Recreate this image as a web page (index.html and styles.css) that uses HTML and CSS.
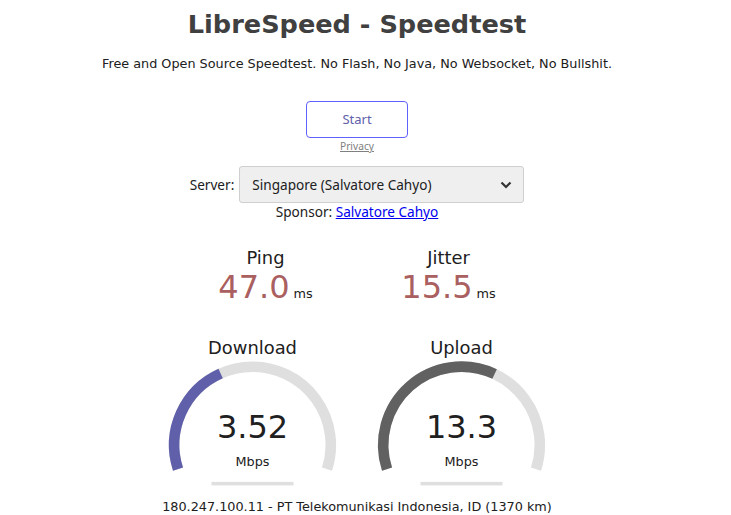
FILE: index.html
```html
<!DOCTYPE html>
<html lang="en">
<head>
    <meta charset="UTF-8">
    <title>LibreSpeed - Speedtest</title>
    <link rel="stylesheet" href="styles.css">
</head>
<body>
<h1>LibreSpeed - Speedtest</h1>
<p class="tagline">Free and Open Source Speedtest. No Flash, No Java, No Websocket, No Bullshit.</p>

<div class="start-btn">Start</div>
<div><a class="privacy" href="#">Privacy</a></div>

<div class="server-row">
    <span class="server-label">Server:</span>
    <div class="server-select">
        <span>Singapore (Salvatore Cahyo)</span>
        <svg width="12" height="8" viewBox="0 0 12 8"><path d="M1.5 1.5 L6 6 L10.5 1.5" fill="none" stroke="#333" stroke-width="2.2"/></svg>
    </div>
</div>
<div class="sponsor">Sponsor: <a href="#">Salvatore Cahyo</a></div>

<div class="test-group small">
    <div class="test-area2">
        <div class="test-name">Ping</div>
        <div class="meter-text ping">47.0</div>
        <div class="unit">ms</div>
    </div>
    <div class="test-area2">
        <div class="test-name">Jitter</div>
        <div class="meter-text ping">15.5</div>
        <div class="unit">ms</div>
    </div>
</div>

<div class="test-group">
    <div class="test-area">
        <div class="test-name">Download</div>
        <svg class="gauge" viewBox="0 0 205 160" width="205" height="160">
            <path d="M28.03 133.2 A78.3 78.3 0 1 1 176.97 133.2" fill="none" stroke="#dfdfdf" stroke-width="10.56"/>
            <path d="M28.03 133.2 A78.3 78.3 0 0 1 70.65 37.47" fill="none" stroke="#6060AA" stroke-width="10.56"/>
            <rect x="61.5" y="145.9" width="82" height="3.5" fill="#dfdfdf"/>
        </svg>
        <div class="meter-text">3.52</div>
        <div class="unit">Mbps</div>
    </div>
    <div class="test-area">
        <div class="test-name">Upload</div>
        <svg class="gauge" viewBox="0 0 205 160" width="205" height="160">
            <path d="M28.03 133.2 A78.3 78.3 0 1 1 176.97 133.2" fill="none" stroke="#dfdfdf" stroke-width="10.56"/>
            <path d="M28.03 133.2 A78.3 78.3 0 0 1 135.6 38.04" fill="none" stroke="#616161" stroke-width="10.56"/>
            <rect x="61.5" y="145.9" width="82" height="3.5" fill="#dfdfdf"/>
        </svg>
        <div class="meter-text">13.3</div>
        <div class="unit">Mbps</div>
    </div>
</div>

<div class="ip-area">180.247.100.11 - PT Telekomunikasi Indonesia, ID (1370 km)</div>
</body>
</html>
```
FILE: styles.css
```css
html, body {
    margin: 0;
    padding: 0;
    background: #FFFFFF;
    color: #202020;
}
body {
    text-align: center;
    font-family: "DejaVu Sans", sans-serif;
    font-size: 12.8px;
    padding-right: 17px;
}
h1 {
    color: #404040;
    font-size: 25.6px;
    margin: 9px 0 0;
}
.tagline {
    margin: 17px 0 0;
}
.start-btn {
    display: block;
    margin: 30px auto 0;
    width: 102px;
    height: 37px;
    line-height: 34px;
    box-sizing: border-box;
    border: 1.5px solid #6060FF;
    border-radius: 4px;
    color: #6060AA;
    font-family: "Noto Sans", sans-serif;
    font-size: 13px;
    cursor: pointer;
}
.privacy {
    font-family: "Noto Sans", sans-serif;
    font-size: 10.2px;
    color: #808080;
}
.server-row {
    display: flex;
    justify-content: center;
    align-items: center;
    gap: 5px;
    margin-top: 13px;
    font-family: "Noto Sans", sans-serif;
    font-size: 13.6px;
}
.server-select {
    display: flex;
    align-items: center;
    justify-content: space-between;
    width: 285px;
    height: 37px;
    box-sizing: border-box;
    padding: 0 11px 0 12px;
    background: #efeff0;
    border: 1px solid #cfcfcf;
    border-radius: 3px;
    text-align: left;
}
.sponsor {
    font-family: "Noto Sans", sans-serif;
    font-size: 13.6px;
    line-height: 17px;
}
.sponsor a {
    color: #0000EE;
}
.test-group {
    display: flex;
    justify-content: center;
    gap: 4px;
}
.test-group.small {
    margin-top: 27px;
}
.test-area2 {
    width: 179px;
    height: 89px;
}
.test-area2 .test-name {
    font-size: 17.9px;
}
.test-area2 .meter-text {
    display: inline-block;
    font-size: 32px;
}
.test-area2 .unit {
    display: inline-block;
}
.ping {
    color: #AA6060;
}
.test-area {
    position: relative;
    width: 205px;
    height: 160px;
}
.test-area .test-name {
    position: absolute;
    top: 1px;
    left: 0;
    width: 100%;
    font-size: 17.9px;
    z-index: 9;
}
.gauge {
    position: absolute;
    top: 0;
    left: 0;
}
.test-area .meter-text {
    position: absolute;
    bottom: 49.6px;
    left: 0;
    width: 100%;
    font-size: 32px;
    z-index: 9;
}
.test-area .unit {
    position: absolute;
    bottom: 26.6px;
    left: 0;
    width: 100%;
    z-index: 9;
}
.ip-area {
    margin-top: 3px;
}
```
